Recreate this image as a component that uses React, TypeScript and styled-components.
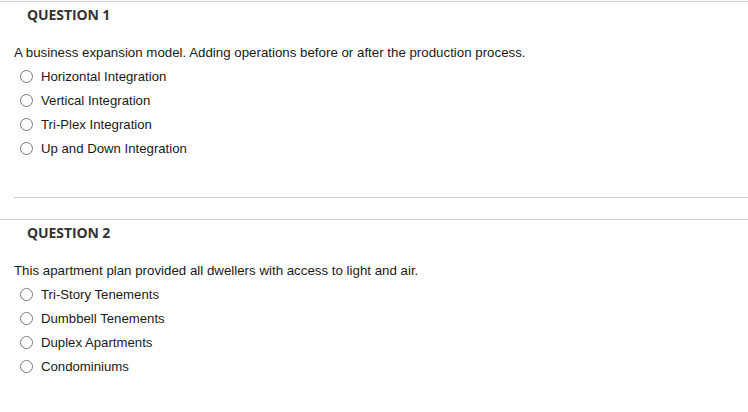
import React, { FC } from 'react';
import styled, { createGlobalStyle } from 'styled-components';

const GlobalStyle = createGlobalStyle`
	body {
		margin: 0;
		background: #ffffff;
		font-family: 'Liberation Sans', Arial, sans-serif;
		color: #1a1a1a;
	}
`;

const Page = styled.div`
	padding-top: 1px;
	width: 748px;
`;

const QuestionBlock = styled.section<{ last?: boolean }>`
	border-top: 1px solid #cfcfcf;
	margin-bottom: ${({ last }) => (last ? '0' : '21px')};
`;

const QuestionHeading = styled.h3`
	margin: 0;
	padding: 3px 0 0 27px;
	font-family: 'Open Sans', sans-serif;
	font-weight: 700;
	font-size: 14px;
	line-height: 20px;
	color: #333333;
	letter-spacing: -0.1px;
`;

const QuestionBody = styled.div`
	padding-left: 14px;
`;

const Prompt = styled.p`
	margin: 19px 0 0;
	font-size: 13.3px;
	line-height: 18px;
	color: #1a1a1a;
`;

const OptionList = styled.ul`
	list-style: none;
	margin: 2px 0 0;
	padding: 0;
`;

const OptionRow = styled.li`
	display: flex;
	align-items: center;
	height: 24px;
	padding-left: 6px;
	font-size: 13.2px;
	color: #1a1a1a;
`;

const Radio = styled.span`
	box-sizing: border-box;
	width: 13px;
	height: 13px;
	margin-right: 8px;
	margin-top: 1px;
	border: 1px solid #7a7a7a;
	border-radius: 50%;
	background: #ffffff;
	flex-shrink: 0;
`;

const Divider = styled.div`
	margin: 37px 0 0 14px;
	border-top: 1px solid #cfcfcf;
`;

type Question = {
	number: number;
	prompt: string;
	options: string[];
};

const QUESTIONS: Question[] = [
	{
		number: 1,
		prompt: 'A business expansion model. Adding operations before or after the production process.',
		options: ['Horizontal Integration', 'Vertical Integration', 'Tri-Plex Integration', 'Up and Down Integration'],
	},
	{
		number: 2,
		prompt: 'This apartment plan provided all dwellers with access to light and air.',
		options: ['Tri-Story Tenements', 'Dumbbell Tenements', 'Duplex Apartments', 'Condominiums'],
	},
];

const App: FC = () => (
	<Page>
		<GlobalStyle />
		{QUESTIONS.map((q, index) => (
			<QuestionBlock key={q.number} last={index === QUESTIONS.length - 1}>
				<QuestionHeading>QUESTION {q.number}</QuestionHeading>
				<QuestionBody>
					<Prompt>{q.prompt}</Prompt>
					<OptionList>
						{q.options.map((option) => (
							<OptionRow key={option}>
								<Radio />
								{option}
							</OptionRow>
						))}
					</OptionList>
				</QuestionBody>
				<Divider />
			</QuestionBlock>
		))}
	</Page>
);

export default App;
